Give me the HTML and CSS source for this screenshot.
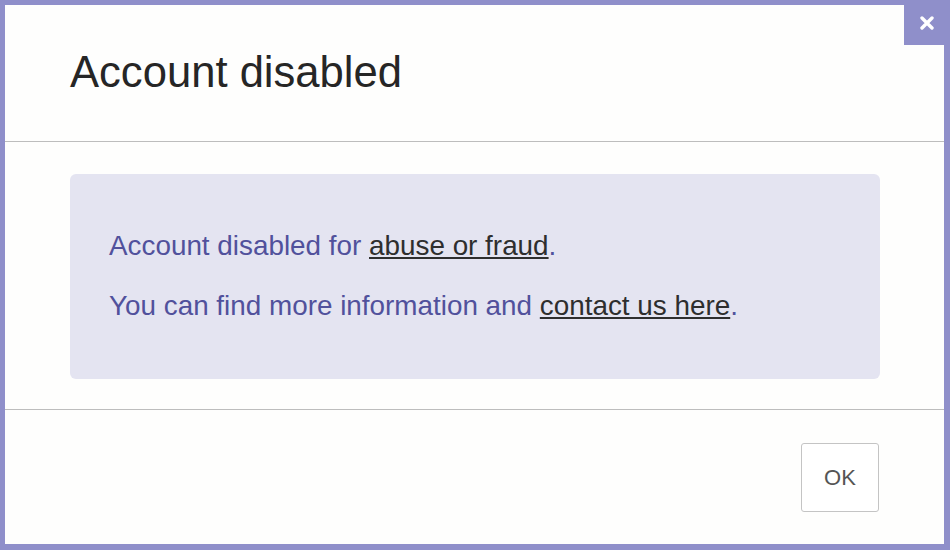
FILE: index.html
```html
<!DOCTYPE html>
<html>
<head>
<meta charset="utf-8">
<title>Account disabled</title>
<link rel="stylesheet" href="styles.css">
</head>
<body>
<div class="frame">
  <div class="dialog">
    <a class="close" href="#" title="Close">
      <svg width="14" height="14" viewBox="0 0 14 14"><path d="M2 2 L12 12 M12 2 L2 12" stroke="#fff" stroke-width="3.4" stroke-linecap="round"/></svg>
    </a>
    <div class="dialog-header">
      <h1 class="title">Account disabled</h1>
    </div>
    <div class="dialog-body">
      <div class="alert">
        <p>Account disabled for <a href="#">abuse or fraud</a>.</p>
        <p>You can find more information and <a href="#">contact us here</a>.</p>
      </div>
    </div>
    <div class="dialog-footer">
      <button class="button">OK</button>
    </div>
  </div>
</div>
</body>
</html>
```
FILE: styles.css
```css
html, body {
  margin: 0;
  height: 100%;
}

body {
  background: #8f8fca;
  font-family: "Liberation Sans", Arial, sans-serif;
}

.frame {
  padding: 5px 6px 6px 5px;
  height: 100%;
  box-sizing: border-box;
}

.dialog {
  position: relative;
  background: #fefefd;
  height: 100%;
  display: flex;
  flex-direction: column;
}

/* close tab sits over the top right corner */
.close {
  position: absolute;
  top: -5px;
  right: -6px;
  width: 46px;
  height: 45px;
  background: #8f8fca;
  display: flex;
  align-items: center;
  justify-content: center;
}

.dialog-header {
  padding: 41px 65px 43px;
  border-bottom: 1px solid #bdbdbd;
}

.title {
  margin: 0;
  font-size: 43.6px;
  line-height: 52px;
  font-weight: normal;
  color: #262626;
}

.dialog-body {
  padding: 32px 64px 30px 65px;
  border-bottom: 1px solid #bdbdbd;
}

.alert {
  background: #e4e4f1;
  border-radius: 6px;
  padding: 55px 39px 56px;
  color: #51519c;
  font-size: 27.85px;
  line-height: 34px;
}

.alert p {
  margin: 0;
}

.alert p + p {
  margin-top: 26px;
}

.alert a {
  color: #2e2e2e;
  text-decoration: underline;
}

.dialog-footer {
  display: flex;
  justify-content: flex-end;
  padding: 33px 65px 31px;
}

.button {
  width: 78px;
  height: 69px;
  background: #fff;
  border: 1px solid #c4c4c4;
  border-radius: 3px;
  font-family: "Liberation Sans", Arial, sans-serif;
  font-size: 22px;
  color: #555;
  cursor: pointer;
}
```
